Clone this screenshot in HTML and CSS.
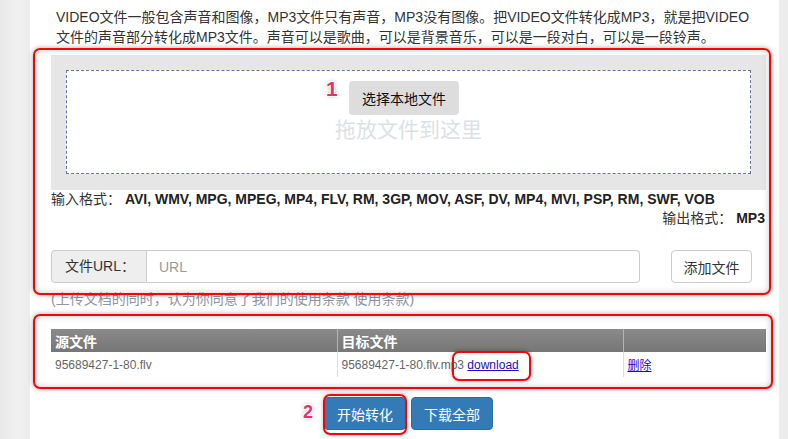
FILE: index.html
```html
<!DOCTYPE html>
<html lang="zh-CN">
<head>
<meta charset="utf-8">
<title>VIDEO转MP3</title>
<link rel="stylesheet" href="styles.css">
</head>
<body>
<div class="page">
  <p class="intro">VIDEO文件一般包含声音和图像，MP3文件只有声音，MP3没有图像。把VIDEO文件转化成MP3，就是把VIDEO文件的声音部分转化成MP3文件。声音可以是歌曲，可以是背景音乐，可以是一段对白，可以是一段铃声。</p>

  <section class="upload">
    <div class="drop-panel">
      <div class="dropzone">
        <button class="btn-local" type="button">选择本地文件</button>
        <div class="drop-hint">拖放文件到这里</div>
      </div>
    </div>
    <div class="formats">
      <div class="fmt-in"><span class="fmt-label">输入格式：</span> <b>AVI, WMV, MPG, MPEG, MP4, FLV, RM, 3GP, MOV, ASF, DV, MP4, MVI, PSP, RM, SWF, VOB</b></div>
      <div class="fmt-out"><span class="fmt-label">输出格式：</span> <b>MP3</b></div>
    </div>
    <div class="url-row">
      <div class="input-group">
        <span class="addon">文件URL：</span>
        <input class="url-input" type="text" placeholder="URL">
      </div>
      <button class="btn-add" type="button">添加文件</button>
    </div>
    <p class="terms">(上传文档的同时，认为你同意了我们的使用条款 使用条款)</p>
  </section>

  <table class="files">
    <colgroup><col class="c1"><col class="c2"><col class="c3"></colgroup>
    <thead>
      <tr><th>源文件</th><th>目标文件</th><th></th></tr>
    </thead>
    <tbody>
      <tr>
        <td>95689427-1-80.flv</td>
        <td>95689427-1-80.flv.mp3 <a href="#">download</a></td>
        <td><a href="#">删除</a></td>
      </tr>
    </tbody>
  </table>

  <div class="actions">
    <button class="btn-primary" type="button">开始转化</button>
    <button class="btn-primary" type="button">下载全部</button>
  </div>

  <div class="mark mark-upload"></div>
  <div class="mark mark-table"></div>
  <div class="mark mark-download"></div>
  <div class="mark mark-start"></div>
  <span class="step step-1">1</span>
  <span class="step step-2">2</span>
</div>
</body>
</html>
```

FILE: styles.css
```css
html, body {
  margin: 0;
  padding: 0;
}

body {
  background: linear-gradient(90deg, #e9e9e9 0, #f1f1f1 18px, #ececec 30px);
  font-family: "Liberation Sans", "Noto Sans CJK SC", sans-serif;
  font-size: 14px;
  color: #333;
  min-height: 439px;
  overflow: hidden;
}

.page {
  position: relative;
  box-sizing: border-box;
  margin-left: 30px;
  width: 749px;
  min-height: 439px;
  background: #fff;
  padding: 7px 13px 0 21px;
}

.intro {
  margin: 0 11px 8px 0;
  padding-left: 5px;
  line-height: 20px;
  font-size: 14px;
  color: #333;
}

.drop-panel {
  background: #e6e6e6;
  padding: 15px 15px 16px;
}

.dropzone {
  box-sizing: border-box;
  height: 104px;
  border: 1px dashed #6a6fa6;
  background: #fff;
  padding-top: 10px;
  text-align: center;
}

.btn-local {
  width: 110px;
  height: 34px;
  border: 0;
  border-radius: 4px;
  background: #dddddd;
  color: #111;
  font-family: inherit;
  font-size: 14px;
  margin-right: 9px;
}

.drop-hint {
  font-size: 21px;
  line-height: 30px;
  color: #dcdfe4;
}

.formats {
  font-size: 14px;
  line-height: 19px;
  color: #333;
}

.formats b {
  font-weight: bold;
  color: #222;
}

.fmt-out {
  text-align: right;
  margin-right: 1px;
}

.url-row {
  display: flex;
  justify-content: space-between;
  align-items: center;
  margin-top: 22px;
  padding-right: 14px;
}

.input-group {
  display: flex;
  width: 589px;
  height: 33px;
}

.addon {
  box-sizing: border-box;
  width: 96px;
  padding-left: 13px;
  background: #eeeeee;
  border: 1px solid #cccccc;
  border-radius: 4px 0 0 4px;
  line-height: 31px;
  color: #333;
}

.url-input {
  flex: 1;
  box-sizing: border-box;
  height: 33px;
  margin: 0;
  border: 1px solid #cccccc;
  border-left: 0;
  border-radius: 0 4px 4px 0;
  padding: 0 12px;
  font-family: inherit;
  font-size: 14px;
  color: #555;
  outline: none;
}

.url-input::placeholder {
  color: #999;
}

.btn-add {
  box-sizing: border-box;
  width: 81px;
  height: 33px;
  border: 1px solid #cccccc;
  border-radius: 4px;
  background: #fff;
  color: #333;
  font-family: inherit;
  font-size: 14px;
}

.terms {
  margin: 6px 0 0;
  line-height: 20px;
  font-size: 14px;
  color: #8c95a6;
}

.files {
  margin-top: 20px;
  width: 100%;
  border-collapse: collapse;
  table-layout: fixed;
}

.files .c1, .files .c2 { width: 40%; }
.files .c3 { width: 20%; }

.files th {
  height: 23px;
  padding: 0 4px;
  background: linear-gradient(#8a8a8a, #767676);
  color: #fff;
  font-size: 14px;
  font-weight: bold;
  text-align: left;
  border-right: 1px solid #b5b5b5;
}

.files th:last-child,
.files td:last-child {
  border-right: 0;
}

.files td {
  height: 25px;
  padding: 0 4px;
  font-size: 12px;
  color: #666;
  border-right: 1px solid #dddddd;
}

.files a {
  color: #1a0dcc;
  text-decoration: underline;
}

.actions {
  display: flex;
  justify-content: center;
  gap: 5px;
  margin-top: 20px;
}

.btn-primary {
  box-sizing: border-box;
  width: 82px;
  height: 33px;
  border: 1px solid #2e6da4;
  border-radius: 4px;
  background: #337ab7;
  color: #fff;
  font-family: inherit;
  font-size: 14px;
}

/* annotation overlays */
.mark {
  position: absolute;
  box-sizing: border-box;
  border: 2px solid #ff0000;
  border-radius: 7px;
  box-shadow: 0 0 5px rgba(0, 0, 0, 0.35), inset 0 0 6px rgba(0, 0, 0, 0.22);
  pointer-events: none;
}

.mark-upload { left: 3px; top: 48px; width: 738px; height: 247px; }
.mark-table { left: 3px; top: 314px; width: 740px; height: 75px; }
.mark-download { left: 422px; top: 351px; width: 79px; height: 30px; box-shadow: 0 0 4px rgba(0, 0, 0, 0.3); }
.mark-start { left: 293px; top: 394px; width: 84px; height: 41px; box-shadow: 0 0 4px rgba(0, 0, 0, 0.3); }

.step {
  position: absolute;
  font-family: "Liberation Sans", sans-serif;
  font-weight: bold;
  color: #ee2d6c;
  text-shadow: -1px -1px 0 #fff, 1px -1px 0 #fff, -1px 1px 0 #fff, 1px 1px 0 #fff, 0 0 4px rgba(0, 0, 0, 0.45);
  line-height: 20px;
}

.step-1 { left: 296px; top: 79px; font-size: 21px; }
.step-2 { left: 273px; top: 402px; font-size: 18px; }
```
